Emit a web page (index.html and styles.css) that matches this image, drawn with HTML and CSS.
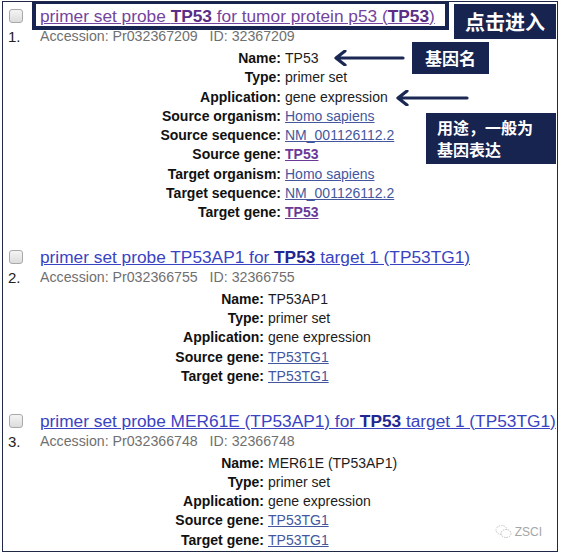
FILE: index.html
```html
<!DOCTYPE html>
<html lang="zh-CN">
<head>
  <meta charset="UTF-8" />
  <title>Probe results</title>
  <link rel="stylesheet" href="styles.css">
</head>
<body>
  <div class="sheet">

    <!-- Result 1 -->
    <div class="entry">
      <span class="entry__check"></span>
      <a class="entry__title entry__title--visited" href="#">primer set probe <b>TP53</b> for tumor protein p53 (<b>TP53</b>)</a>
      <span class="entry__num">1.</span>
      <div class="entry__meta">Accession: Pr032367209&nbsp;&nbsp; ID: 32367209</div>
      <dl class="details details--wide">
        <dt>Name:</dt><dd>TP53</dd>
        <dt>Type:</dt><dd>primer set</dd>
        <dt>Application:</dt><dd>gene expression</dd>
        <dt>Source organism:</dt><dd><a href="#">Homo sapiens</a></dd>
        <dt>Source sequence:</dt><dd><a href="#">NM_001126112.2</a></dd>
        <dt>Source gene:</dt><dd><a class="gene" href="#">TP53</a></dd>
        <dt>Target organism:</dt><dd><a href="#">Homo sapiens</a></dd>
        <dt>Target sequence:</dt><dd><a href="#">NM_001126112.2</a></dd>
        <dt>Target gene:</dt><dd><a class="gene" href="#">TP53</a></dd>
      </dl>
    </div>

    <!-- Result 2 -->
    <div class="entry">
      <span class="entry__check"></span>
      <a class="entry__title" href="#">primer set probe TP53AP1 for <b>TP53</b> target 1 (TP53TG1)</a>
      <span class="entry__num">2.</span>
      <div class="entry__meta">Accession: Pr032366755&nbsp;&nbsp; ID: 32366755</div>
      <dl class="details">
        <dt>Name:</dt><dd>TP53AP1</dd>
        <dt>Type:</dt><dd>primer set</dd>
        <dt>Application:</dt><dd>gene expression</dd>
        <dt>Source gene:</dt><dd><a href="#">TP53TG1</a></dd>
        <dt>Target gene:</dt><dd><a href="#">TP53TG1</a></dd>
      </dl>
    </div>

    <!-- Result 3 -->
    <div class="entry">
      <span class="entry__check"></span>
      <a class="entry__title" href="#">primer set probe MER61E (TP53AP1) for <b>TP53</b> target 1 (TP53TG1)</a>
      <span class="entry__num">3.</span>
      <div class="entry__meta">Accession: Pr032366748&nbsp;&nbsp; ID: 32366748</div>
      <dl class="details">
        <dt>Name:</dt><dd>MER61E (TP53AP1)</dd>
        <dt>Type:</dt><dd>primer set</dd>
        <dt>Application:</dt><dd>gene expression</dd>
        <dt>Source gene:</dt><dd><a href="#">TP53TG1</a></dd>
        <dt>Target gene:</dt><dd><a href="#">TP53TG1</a></dd>
      </dl>
    </div>

    <!-- Annotations laid over the screenshot -->
    <span class="note-frame"></span>
    <div class="note note--enter">点击进入</div>
    <div class="note note--name">基因名</div>
    <div class="note note--use">用途，一般为<br>基因表达</div>

    <svg class="arrow arrow--name" width="72" height="16" viewBox="0 0 72 16">
      <path d="M70 8 H4 M12 1 L3 8 L12 15" fill="none" stroke="#1b2853" stroke-width="3.2" stroke-linecap="round" stroke-linejoin="round"/>
    </svg>
    <svg class="arrow arrow--use" width="74" height="16" viewBox="0 0 74 16">
      <path d="M72 8 H4 M12 1 L3 8 L12 15" fill="none" stroke="#1b2853" stroke-width="3.2" stroke-linecap="round" stroke-linejoin="round"/>
    </svg>

    <!-- Watermark -->
    <div class="watermark">
      <svg width="17" height="15" viewBox="0 0 17 15">
        <ellipse cx="6.5" cy="6" rx="5.5" ry="4.5" fill="none" stroke="#c4c4c4" stroke-width="1" stroke-dasharray="1.5 1"/>
        <ellipse cx="11" cy="9.5" rx="5" ry="4" fill="#fff" stroke="#bdbdbd" stroke-width="1" stroke-dasharray="1.5 1"/>
      </svg>
      <span>ZSCI</span>
    </div>
  </div>
</body>
</html>
```

FILE: styles.css
```css
/* Page frame */
body {
  margin: 0;
  background: #fff;
  font-family: "Liberation Sans", Arial, sans-serif;
  color: #222;
}
.sheet {
  position: relative;
  box-sizing: border-box;
  width: 556px;
  height: 551px;
  margin: 1px 0 0 2px;
  padding: 4px 0 0 0;
  border: 1.5px solid #1f2945;
  overflow: hidden;
}

/* Result entry */
.entry {
  display: grid;
  grid-template-columns: 37px auto;
  margin-bottom: 24.5px;
}
.entry__check {
  align-self: center;
  width: 12px;
  height: 12px;
  margin-left: 6px;
  border: 1px solid #a9a9a9;
  border-radius: 3px;
  background: linear-gradient(#f4f4f4, #dcdcdc);
}
.entry__title {
  font-size: 17.3px;
  line-height: 20px;
  white-space: nowrap;
  color: #3a43c2;
  text-decoration: underline;
}
.entry__title b { color: #1f2793; }
.entry__title--visited { color: #74449e; }
.entry__title--visited b { color: #5a2d86; }
.entry__num {
  font-size: 15px;
  line-height: 20px;
  padding: 1px 0 0 5px;
  color: #222;
}
.entry__meta {
  font-size: 14.2px;
  line-height: 20px;
  color: #707070;
}

/* Details list */
.details {
  grid-column: 2;
  display: grid;
  grid-template-columns: 224px auto;
  column-gap: 4px;
  margin: 2px 0 0 0;
  font-size: 14px;
  line-height: 19.25px;
}
.details--wide { grid-template-columns: 241px auto; }
.details dt {
  text-align: right;
  font-weight: 700;
  color: #111;
}
.details dd {
  margin: 0;
  color: #1c1c1c;
}
.details a {
  color: #44579e;
  text-decoration: underline;
}
.details a.gene {
  font-weight: 700;
  color: #6a3a98;
}

/* Annotations */
.note-frame {
  position: absolute;
  left: 29px;
  top: -2px;
  width: 409px;
  height: 22px;
  border: 4px solid #17244f;
}
.note {
  position: absolute;
  box-sizing: border-box;
  background: #17244f;
  color: #fff;
  font-family: "Noto Sans CJK SC", sans-serif;
  font-weight: 700;
}
.note--enter {
  left: 451px;
  top: 2px;
  width: 102px;
  height: 35px;
  font-size: 20px;
  line-height: 35px;
  text-align: center;
}
.note--name {
  left: 409px;
  top: 40px;
  width: 77px;
  height: 32px;
  font-size: 17px;
  line-height: 32px;
  text-align: center;
}
.note--use {
  left: 423px;
  top: 111px;
  width: 130px;
  height: 51px;
  padding: 3px 0 0 11px;
  font-size: 16px;
  line-height: 22px;
}
.arrow { position: absolute; }
.arrow--name { left: 330px; top: 48px; }
.arrow--use { left: 392px; top: 88px; }

/* Watermark */
.watermark {
  position: absolute;
  right: 15px;
  bottom: 12px;
  display: flex;
  align-items: center;
  gap: 3px;
  font-size: 12px;
  color: #a6a6a6;
}
```
